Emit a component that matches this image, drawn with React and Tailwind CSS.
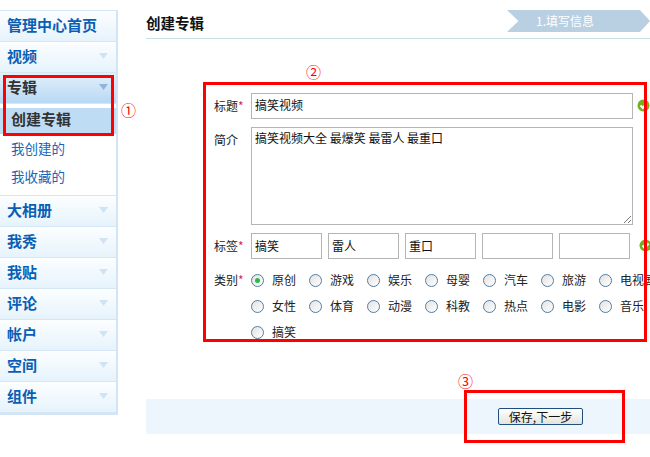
const font = { fontFamily: '"Noto Sans CJK SC", "Liberation Sans", sans-serif' };

function Caret({ dark }) {
  return (
    <svg width="9" height="6" viewBox="0 0 9 6" className="shrink-0">
      <path d="M0 0H9L4.5 6Z" fill={dark ? "#8fb5d8" : "#cfe3f3"} />
    </svg>
  );
}

function NavRow({ label, active, first }) {
  return (
    <div
      className={`flex h-[31px] items-center justify-between border-b pb-[2px] pl-[7px] pr-[8px] text-[15px] font-bold ${
        active
          ? "border-[#d5e6f5] bg-gradient-to-b from-[#e3f0fb] to-[#b8d8f4] text-[#333333]"
          : "border-[#d5e6f5] bg-gradient-to-b from-[#fcfeff] to-[#e6f3fc] text-[#0a5fb4]"
      }`}
    >
      <span>{label}</span>
      {!first && <Caret dark={active} />}
    </div>
  );
}

function Check({ className }) {
  return (
    <svg width="13" height="13" viewBox="0 0 13 13" className={className}>
      <circle cx="6.5" cy="6.5" r="6" fill="#6cb31d" />
      <path d="M3.5 6.5L5.8 9L9.5 4.5" fill="none" stroke="#ffffff" strokeWidth="2" />
    </svg>
  );
}

function Label({ text, req }) {
  return (
    <div className="w-[38px] shrink-0 pl-[1px] text-[12px] leading-[25px] text-[#222222]">
      {text}
      {req && <span className="text-[#e0245e]">*</span>}
    </div>
  );
}

function Field({ value, className }) {
  return (
    <div className={`h-[26px] border border-[#b5b5b5] bg-white pl-[3px] text-[12px] text-[#111111] ${className}`}>
      {value}
    </div>
  );
}

function Radio({ label, on }) {
  return (
    <div className="flex h-[26px] w-[58px] shrink-0 items-center gap-[8px] text-[12px] text-[#222222]">
      <span className="flex h-[13px] w-[13px] shrink-0 items-center justify-center rounded-full border border-[#4f7ea6] bg-gradient-to-br from-[#e2e2e2] to-[#ffffff]">
        {on && <span className="h-[5px] w-[5px] rounded-full bg-[#2fb84a]" />}
      </span>
      <span className="whitespace-nowrap">{label}</span>
    </div>
  );
}

const cats = ["原创","游戏","娱乐","母婴","汽车","旅游","电视剧","女性","体育","动漫","科教","热点","电影","音乐","搞笑"];

export default function App() {
  return (
    <div className="relative flex h-[457px] w-[650px] overflow-hidden bg-white" style={font}>
      <aside className="mt-[10px] w-[118px] shrink-0 self-start border-t border-r-2 border-b-2 border-[#d3e5f5]">
        <NavRow label="管理中心首页" first />
        <NavRow label="视频" />
        <NavRow label="专辑" active />
        <div className="pt-[4px]">
          <div className="flex h-[26px] items-center bg-[#bfdcf5] pb-[3px] pl-[11px] text-[15px] font-bold text-[#333333]">创建专辑</div>
          <div className="flex h-[28px] items-center pl-[11px] text-[13.5px] text-[#1767b8]">我创建的</div>
          <div className="flex h-[28px] items-center pl-[11px] text-[13.5px] text-[#1767b8]">我收藏的</div>
          <div className="h-[6px] border-b border-[#d5e6f5]" />
        </div>
        {["大相册","我秀","我贴","评论","帐户","空间","组件"].map((l) => (
          <NavRow key={l} label={l} />
        ))}
      </aside>

      <main className="ml-[28px] flex w-[504px] shrink-0 flex-col">
        <header className="mt-[10px] flex h-[29px] items-start justify-between border-b border-[#c9e0e8]">
          <h1 className="pt-[2px] text-[14.5px] font-bold text-[#111111]">创建专辑</h1>
          <div className="flex h-[22px] w-[143px] items-center bg-[#b9cfe2] pl-[29px] text-[12px] text-white [clip-path:polygon(0_0,93%_0,100%_50%,93%_100%,0_100%,8%_50%)]">
            1.填写信息
          </div>
        </header>

        <div className="mt-[54px] flex flex-col pl-[67px]">
          <div className="flex">
            <Label text="标题" req />
            <Field value="搞笑视频" className="w-[382px] leading-[22px]" />
            <Check className="ml-[4px] mt-[6px] shrink-0" />
          </div>
          <div className="mt-[8px] flex">
            <Label text="简介" />
            <div className="relative h-[98px] w-[382px] border border-[#b5b5b5] pl-[3px] text-[12px] leading-[20px] text-[#111111]">
              搞笑视频大全 最爆笑 最雷人 最重口
              <svg width="10" height="10" viewBox="0 0 10 10" className="absolute bottom-0 right-0">
                <path d="M2 9L9 2M6 9L9 6" stroke="#777777" strokeWidth="1" />
              </svg>
            </div>
          </div>
          <div className="mt-[8px] flex">
            <Label text="标签" req />
            <div className="flex gap-[6px]">
              <Field value="搞笑" className="w-[71px] leading-[24px]" />
              <Field value="雷人" className="w-[71px] leading-[24px]" />
              <Field value="重口" className="w-[71px] leading-[24px]" />
              <Field value="" className="w-[71px]" />
              <Field value="" className="w-[71px]" />
            </div>
            <Check className="ml-[9px] mt-[6px] shrink-0" />
          </div>
          <div className="mt-[8px] flex">
            <Label text="类别" req />
            <div className="flex w-[406px] shrink-0 flex-wrap">
              {cats.map((c, i) => (
                <Radio key={c} label={c} on={i === 0} />
              ))}
            </div>
          </div>
        </div>

        <div className="mt-[54px] flex h-[35px] items-center bg-[#eef6fd] pl-[352px]">
          <button className="h-[17px] w-[85px] rounded-[2px] border border-[#1f4f7f] bg-gradient-to-b from-[#ffffff] to-[#e4e4de] text-[12px] leading-[15px] text-[#111111]">
            保存,下一步
          </button>
        </div>
      </main>

      <div className="pointer-events-none absolute left-[3px] top-[75px] h-[61px] w-[111px] border-[3px] border-[#ff0000]" />
      <div className="pointer-events-none absolute left-[203px] top-[82px] h-[260px] w-[444px] border-[3px] border-[#ff0000]" />
      <div className="pointer-events-none absolute left-[464px] top-[390px] h-[53px] w-[161px] border-[3px] border-[#ff0000]" />
      <span className="absolute left-[121px] top-[100px] text-[15px] leading-[20px] text-[#ff0000]">①</span>
      <span className="absolute left-[306px] top-[62px] text-[15px] leading-[20px] text-[#ff0000]">②</span>
      <span className="absolute left-[458px] top-[371px] text-[15px] leading-[20px] text-[#ff0000]">③</span>
    </div>
  );
}
